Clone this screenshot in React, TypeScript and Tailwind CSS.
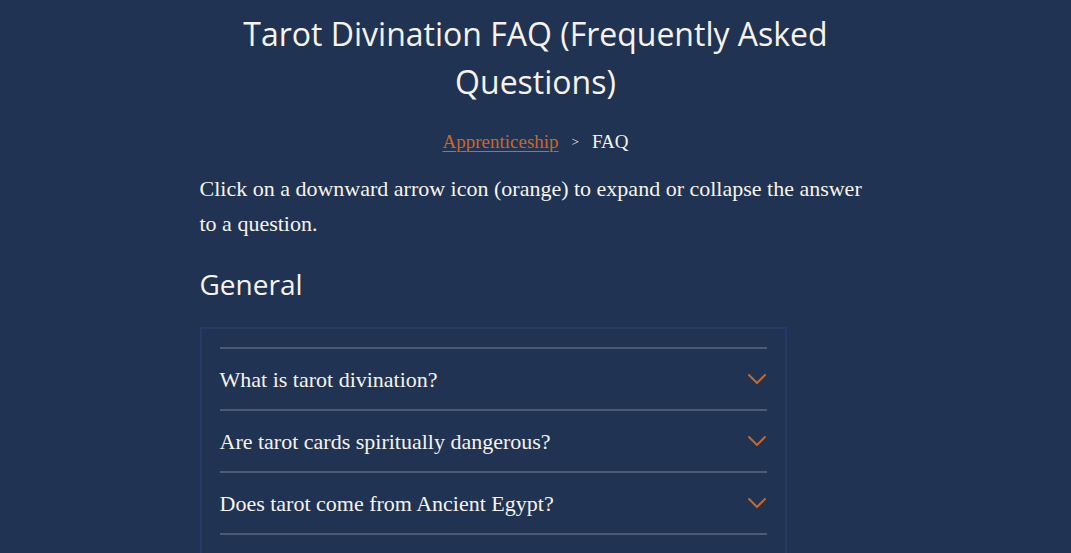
import React, { useState } from 'react';

const questions = [
  'What is tarot divination?',
  'Are tarot cards spiritually dangerous?',
  'Does tarot come from Ancient Egypt?',
];

const Chevron = ({ open }: { open: boolean }) => (
  <svg
    width="20"
    height="12"
    viewBox="0 0 20 12"
    fill="none"
    className={`transition-transform ${open ? 'rotate-180' : ''}`}
  >
    <path d="M2 2 L10 10 L18 2" stroke="#c8672a" strokeWidth="2" strokeLinecap="round" strokeLinejoin="round" />
  </svg>
);

const App = () => {
  const [openIndex, setOpenIndex] = useState<number | null>(null);

  return (
    <div className="min-h-screen bg-[#203352] text-[#f7f3ec] font-['Liberation_Serif',serif]">
      <main className="max-w-2xl mx-auto pt-[10px]">
        {/* Title */}
        <h1 className="font-['Open_Sans',sans-serif] text-[32px] leading-[48px] text-center px-10">
          Tarot Divination FAQ (Frequently Asked Questions)
        </h1>

        {/* Breadcrumb */}
        <nav className="flex justify-center items-center gap-[13px] mt-[22px] text-[19px] leading-[28px]">
          <a href="#" className="text-[#c8672a] underline underline-offset-[3px] decoration-1">
            Apprenticeship
          </a>
          <span className="text-[13px]">&gt;</span>
          <span>FAQ</span>
        </nav>

        <p className="mt-[15px] text-[22px] leading-[35px]">
          Click on a downward arrow icon (orange) to expand or collapse the answer to a question.
        </p>

        <h2 className="font-['Open_Sans',sans-serif] text-[28px] leading-[40px] mt-[23px]">General</h2>

        {/* FAQ list */}
        <div className="mt-[23px] w-[587px] border-2 border-[#26396a] px-[18px] pt-[18px] pb-10">
          {questions.map((q, i) => (
            <div key={q} className="border-t-2 border-[#4b5b77] last:border-b-2">
              <button
                onClick={() => setOpenIndex(openIndex === i ? null : i)}
                className="w-full flex items-center justify-between h-[60px] text-left text-[22px]"
              >
                <span>{q}</span>
                <Chevron open={openIndex === i} />
              </button>
            </div>
          ))}
        </div>
      </main>
    </div>
  );
};

export default App;
